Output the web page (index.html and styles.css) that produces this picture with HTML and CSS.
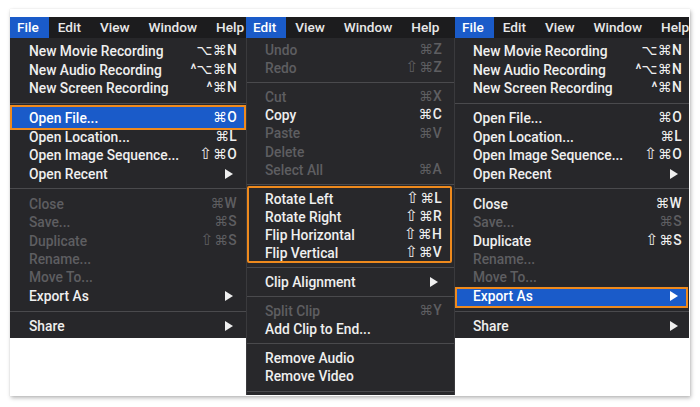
FILE: index.html
```html
<!DOCTYPE html>
<html>
<head>
<meta charset="utf-8">
<link rel="stylesheet" href="styles.css">
</head>
<body>
<div class="card">
  <div class="panel p1">
    <div class="menubar">
      <span class="mi on">File</span><span class="mi">Edit</span><span class="mi">View</span><span class="mi">Window</span><span class="mi">Help</span>
    </div>
    <div class="dropdown">
      <div class="row"><span class="lbl">New Movie Recording</span><span class="key">⌥⌘N</span></div>
      <div class="row"><span class="lbl">New Audio Recording</span><span class="key">^⌥⌘N</span></div>
      <div class="row"><span class="lbl">New Screen Recording</span><span class="key">^⌘N</span></div>
      <div class="sep"></div>
      <div class="row hl hl-a"><span class="lbl">Open File...</span><span class="key">⌘O</span></div>
      <div class="row"><span class="lbl">Open Location...</span><span class="key">⌘L</span></div>
      <div class="row"><span class="lbl">Open Image Sequence...</span><span class="key"><span class="sh">⇧</span>⌘O</span></div>
      <div class="row"><span class="lbl">Open Recent</span><svg class="arr" width="8" height="10" viewBox="0 0 8 10"><path d="M0 0L8 5L0 10Z"/></svg></div>
      <div class="sep"></div>
      <div class="row dis"><span class="lbl">Close</span><span class="key">⌘W</span></div>
      <div class="row dis"><span class="lbl">Save...</span><span class="key">⌘S</span></div>
      <div class="row dis"><span class="lbl">Duplicate</span><span class="key"><span class="sh">⇧</span>⌘S</span></div>
      <div class="row dis"><span class="lbl">Rename...</span></div>
      <div class="row dis"><span class="lbl">Move To...</span></div>
      <div class="row"><span class="lbl">Export As</span><svg class="arr" width="8" height="10" viewBox="0 0 8 10"><path d="M0 0L8 5L0 10Z"/></svg></div>
      <div class="sep"></div>
      <div class="row"><span class="lbl">Share</span><svg class="arr" width="8" height="10" viewBox="0 0 8 10"><path d="M0 0L8 5L0 10Z"/></svg></div>
    </div>
  </div>

  <div class="panel p2">
    <div class="menubar">
      <span class="mi on">Edit</span><span class="mi">View</span><span class="mi">Window</span><span class="mi">Help</span>
    </div>
    <div class="dropdown">
      <div class="row dis"><span class="lbl">Undo</span><span class="key">⌘Z</span></div>
      <div class="row dis"><span class="lbl">Redo</span><span class="key"><span class="sh">⇧</span>⌘Z</span></div>
      <div class="sep"></div>
      <div class="row dis"><span class="lbl">Cut</span><span class="key">⌘X</span></div>
      <div class="row"><span class="lbl">Copy</span><span class="key">⌘C</span></div>
      <div class="row dis"><span class="lbl">Paste</span><span class="key">⌘V</span></div>
      <div class="row dis"><span class="lbl">Delete</span></div>
      <div class="row dis"><span class="lbl">Select All</span><span class="key">⌘A</span></div>
      <div class="sep"></div>
      <div class="grp">
        <div class="row"><span class="lbl">Rotate Left</span><span class="key"><span class="sh">⇧</span>⌘L</span></div>
        <div class="row"><span class="lbl">Rotate Right</span><span class="key"><span class="sh">⇧</span>⌘R</span></div>
        <div class="row"><span class="lbl">Flip Horizontal</span><span class="key"><span class="sh">⇧</span>⌘H</span></div>
        <div class="row"><span class="lbl">Flip Vertical</span><span class="key"><span class="sh">⇧</span>⌘V</span></div>
      </div>
      <div class="sep"></div>
      <div class="row"><span class="lbl">Clip Alignment</span><svg class="arr" width="8" height="10" viewBox="0 0 8 10"><path d="M0 0L8 5L0 10Z"/></svg></div>
      <div class="sep"></div>
      <div class="row dis"><span class="lbl">Split Clip</span><span class="key">⌘Y</span></div>
      <div class="row"><span class="lbl">Add Clip to End...</span></div>
      <div class="sep"></div>
      <div class="row"><span class="lbl">Remove Audio</span></div>
      <div class="row"><span class="lbl">Remove Video</span></div>
      <div class="sep"></div>
    </div>
  </div>

  <div class="panel p3">
    <div class="menubar">
      <span class="mi on">File</span><span class="mi">Edit</span><span class="mi">View</span><span class="mi">Window</span><span class="mi">Help</span>
    </div>
    <div class="dropdown">
      <div class="row"><span class="lbl">New Movie Recording</span><span class="key">⌥⌘N</span></div>
      <div class="row"><span class="lbl">New Audio Recording</span><span class="key">^⌥⌘N</span></div>
      <div class="row"><span class="lbl">New Screen Recording</span><span class="key">^⌘N</span></div>
      <div class="sep"></div>
      <div class="row"><span class="lbl">Open File...</span><span class="key">⌘O</span></div>
      <div class="row"><span class="lbl">Open Location...</span><span class="key">⌘L</span></div>
      <div class="row"><span class="lbl">Open Image Sequence...</span><span class="key"><span class="sh">⇧</span>⌘O</span></div>
      <div class="row"><span class="lbl">Open Recent</span><svg class="arr" width="8" height="10" viewBox="0 0 8 10"><path d="M0 0L8 5L0 10Z"/></svg></div>
      <div class="sep"></div>
      <div class="row"><span class="lbl">Close</span><span class="key">⌘W</span></div>
      <div class="row dis"><span class="lbl">Save...</span><span class="key">⌘S</span></div>
      <div class="row"><span class="lbl">Duplicate</span><span class="key"><span class="sh">⇧</span>⌘S</span></div>
      <div class="row dis"><span class="lbl">Rename...</span></div>
      <div class="row dis"><span class="lbl">Move To...</span></div>
      <div class="row hl hl-b"><span class="lbl">Export As</span><svg class="arr" width="8" height="10" viewBox="0 0 8 10"><path d="M0 0L8 5L0 10Z"/></svg></div>
      <div class="sep"></div>
      <div class="row"><span class="lbl">Share</span><svg class="arr" width="8" height="10" viewBox="0 0 8 10"><path d="M0 0L8 5L0 10Z"/></svg></div>
    </div>
  </div>
</div>
</body>
</html>
```

FILE: styles.css
```css
* { box-sizing: border-box; }
html, body { margin: 0; padding: 0; background: #ffffff; }
body { width: 700px; height: 407px; overflow: hidden; font-family: "Roboto", "Liberation Sans", "DejaVu Sans", sans-serif; }

.card {
  margin: 9px 0 0 10px;
  width: 680px;
  height: 387px;
  background: #ffffff;
  box-shadow: 1px 2px 4px rgba(0,0,0,0.28), 0 0 1px rgba(0,0,0,0.12);
  padding-top: 8px;
  display: flex;
  align-items: flex-start;
}

.panel {
  --row: 18.4px;
  --sepPad: 5.5px;
  --padR: 9px;
  flex: none;
  overflow: hidden;
  background: #262628;
  display: flex;
  flex-direction: column;
}
.p1 { width: 236px; height: 321px; }
.p2 { width: 209px; height: 378px; --row: 18.1px; --sepPad: 5px; --padR: 12px; background: #1e1e20; }
.p3 { width: 234px; height: 321px; --padR: 7px; }

.menubar {
  height: 21px;
  flex: none;
  background: #1c1c1e;
  display: flex;
  align-items: center;
  white-space: nowrap;
  color: #e8e8e8;
  font-size: 13.6px;
  font-weight: 500;
}
.mi { height: 21px; line-height: 21px; padding: 0 10px 0 9px; }
.mi.on { background: #1a5bc9; color: #ffffff; padding-left: 7px; }

.dropdown {
  flex: 1;
  padding-top: 4px;
  background: #27272a;
}
.p2 .dropdown {
  padding-top: 3px;
  border-left: 1px solid #3a3a3d;
  border-right: 1px solid #3a3a3d;
  background: #28282b;
}

.row {
  position: relative;
  height: var(--row);
  display: flex;
  align-items: center;
  justify-content: space-between;
  padding: 0 var(--padR) 0 19px;
  color: #efefef;
  font-size: 13.8px;
  font-weight: 500;
  white-space: nowrap;
}
.p2 .row { padding-left: 18px; }
.p3 .row { padding-left: 18px; }
.row.dis { color: #5e5e61; }
.lbl, .key, .arr { position: relative; z-index: 1; }
.key { font-family: "Roboto", "DejaVu Sans", sans-serif; font-size: 13.8px; font-weight: 500; letter-spacing: 0.3px; line-height: 1; }
.sh { font-family: "DejaVu Sans", sans-serif; font-size: 15.5px; margin-right: 1px; }
.arr { fill: currentColor; margin-right: 4px; }

.sep { padding: var(--sepPad) 0; flex: none; }
.sep::before { content: ""; display: block; height: 1px; background: #4a4a4d; }

.hl::after {
  content: "";
  position: absolute;
  z-index: 0;
  background: #1a5bc9;
  border: 2px solid #ef8a1d;
}
.hl-a::after { left: 0; right: 0; top: -4px; bottom: -2px; }
.hl-b::after { left: 0; right: 1px; top: 0; bottom: -3px; }
.hl { color: #ffffff; }

.grp { position: relative; }
.grp::after {
  content: "";
  position: absolute;
  left: 0;
  right: 2px;
  top: -4px;
  bottom: -1px;
  border: 2px solid #ef8a1d;
  border-radius: 2px;
}
```
